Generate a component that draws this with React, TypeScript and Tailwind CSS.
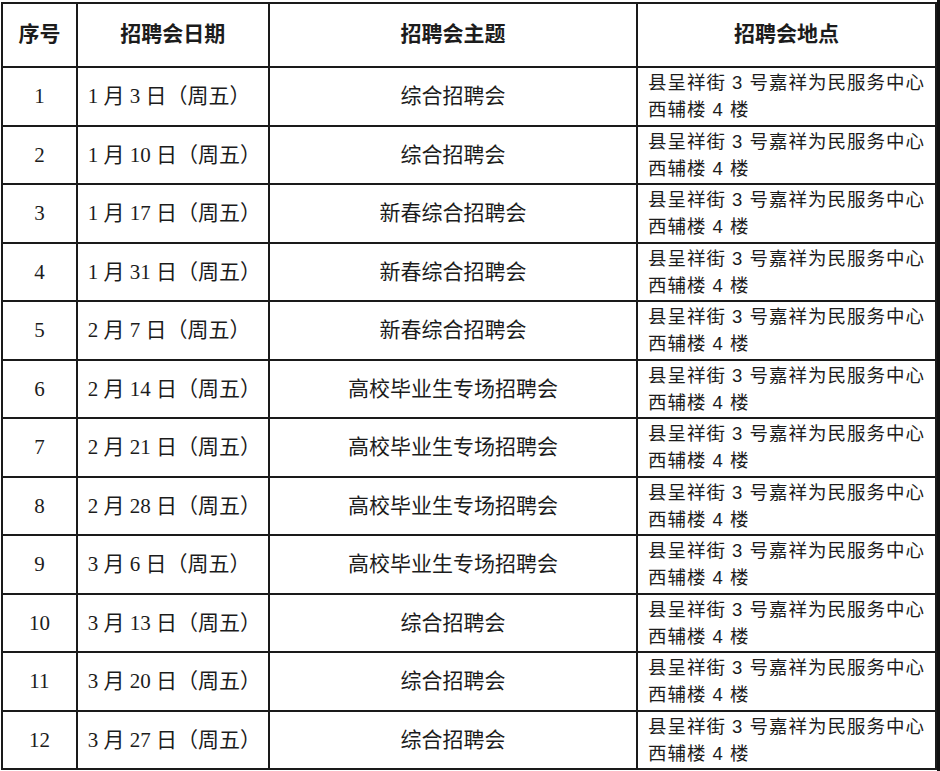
const rows = [
  { no: "1", date: "1 月 3 日（周五）", theme: "综合招聘会" },
  { no: "2", date: "1 月 10 日（周五）", theme: "综合招聘会" },
  { no: "3", date: "1 月 17 日（周五）", theme: "新春综合招聘会" },
  { no: "4", date: "1 月 31 日（周五）", theme: "新春综合招聘会" },
  { no: "5", date: "2 月 7 日（周五）", theme: "新春综合招聘会" },
  { no: "6", date: "2 月 14 日（周五）", theme: "高校毕业生专场招聘会" },
  { no: "7", date: "2 月 21 日（周五）", theme: "高校毕业生专场招聘会" },
  { no: "8", date: "2 月 28 日（周五）", theme: "高校毕业生专场招聘会" },
  { no: "9", date: "3 月 6 日（周五）", theme: "高校毕业生专场招聘会" },
  { no: "10", date: "3 月 13 日（周五）", theme: "综合招聘会" },
  { no: "11", date: "3 月 20 日（周五）", theme: "综合招聘会" },
  { no: "12", date: "3 月 27 日（周五）", theme: "综合招聘会" },
];

const serif = "font-['Liberation_Serif','Noto_Sans_CJK_SC',serif]";
const sans = "font-['Liberation_Sans','Noto_Sans_CJK_SC',sans-serif]";

const App = () => {
  return (
    <div className="w-[940px] h-[771px] bg-white flex">
      <div className="pl-[1px] pt-[2px]">
        <table className="table-fixed border-collapse text-[#1c1c1c]">
          <colgroup>
            <col className="w-[75px]" />
            <col className="w-[192px]" />
            <col className="w-[369px]" />
            <col className="w-[299px]" />
          </colgroup>
          <thead>
            <tr className="h-[64px]">
              {["序号", "招聘会日期", "招聘会主题", "招聘会地点"].map((h) => (
                <th
                  key={h}
                  className={`border-2 border-[#1a1a1a] text-center font-bold text-[21px] ${serif}`}
                >
                  {h}
                </th>
              ))}
            </tr>
          </thead>
          <tbody>
            {rows.map((r) => (
              <tr key={r.no} className="h-[58.5px]">
                <td className={`border-2 border-[#1a1a1a] text-center text-[21px] leading-[28px] ${serif}`}>
                  {r.no}
                </td>
                <td className={`border-2 border-[#1a1a1a] pl-[10px] text-[21px] leading-[28px] whitespace-pre ${serif}`}>
                  {r.date}
                </td>
                <td className={`border-2 border-[#1a1a1a] text-center text-[21px] leading-[28px] ${serif}`}>
                  {r.theme}
                </td>
                <td className={`border-2 border-[#1a1a1a] pl-[10px] pt-[1px] align-top text-[18.5px] leading-[27px] tracking-[1px] whitespace-nowrap ${sans}`}>
                  <div>县呈祥街 3 号嘉祥为民服务中心</div>
                  <div>西辅楼 4 楼</div>
                </td>
              </tr>
            ))}
          </tbody>
        </table>
      </div>
      <div className="ml-auto w-[3px] bg-[#111]" />
    </div>
  );
};

export default App;
